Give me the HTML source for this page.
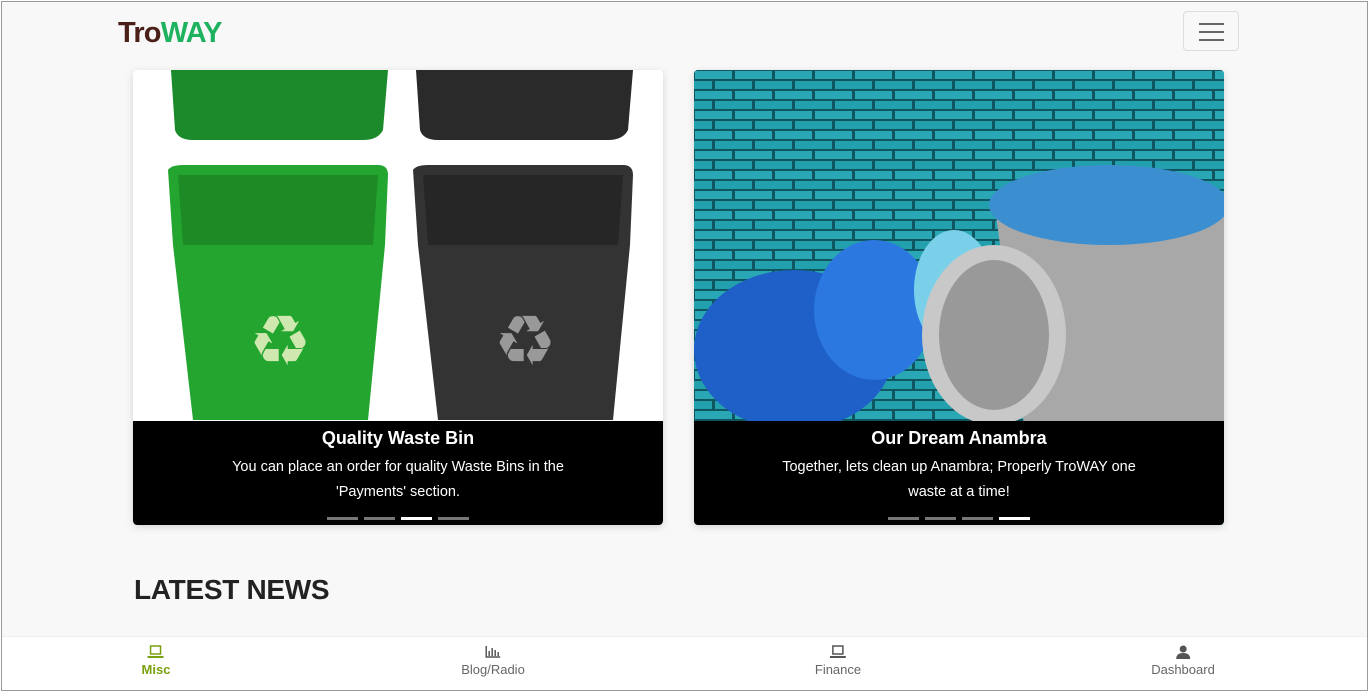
<!DOCTYPE html>
<html><head><meta charset="utf-8"><style>
*{box-sizing:border-box;margin:0;padding:0}
body{width:1370px;height:694px;overflow:hidden;background:#fff;font-family:"Liberation Sans",sans-serif;position:relative}
.frame{position:absolute;left:1px;top:1px;width:1367px;height:690px;border:1px solid #999;background:#f8f8f8;overflow:hidden}
.nav{position:absolute;left:0;top:0;width:100%;height:68px;background:#f8f8f8}
.logo{position:absolute;left:116px;top:15px;font-size:29px;font-weight:bold;letter-spacing:-0.8px}
.logo .t{color:#4a2018}.logo .w{color:#1eb25f}
.burger{position:absolute;left:1181px;top:9px;width:56px;height:40px;border:1px solid #ddd;border-radius:4px}
.burger i{position:absolute;left:15px;width:25px;height:2px;background:#666}
.card{position:absolute;top:68px;width:530px;height:455px;border-radius:4px;overflow:hidden;box-shadow:0 2px 8px rgba(0,0,0,.15)}
.cap{position:absolute;left:0;bottom:0;width:100%;height:104px;background:#000;color:#fff;text-align:center;border-radius:0 0 4px 4px}
.cap h3{font-size:18px;margin-top:7px}
.cap p{font-size:14.5px;line-height:25px;margin:6px auto 0;width:380px}
.ind{position:absolute;bottom:5px;left:0;width:100%;text-align:center;font-size:0}
.ind b{display:inline-block;width:31px;height:3px;background:#777;margin:0 3px}
.ind b.a{background:#fff}
h2{position:absolute;left:132px;top:572px;font-size:28px;color:#222;letter-spacing:-0.3px}
.bot{position:absolute;left:0;top:634px;width:100%;height:56px;background:#fff;border-top:1px solid #eee}
.it{position:absolute;top:8px;text-align:center;font-size:13px;color:#666;transform:translateX(-50%)}
.it svg{display:block;margin:0 auto 3px}
</style></head><body><div class="frame">
<div class="nav"><div class="logo"><span class="t">Tro</span><span class="w">WAY</span></div>
<div class="burger"><i style="top:11px"></i><i style="top:19px"></i><i style="top:27px"></i></div></div>

<div class="card" style="left:131px;background:#fff">
<svg width="530" height="355" style="position:absolute;top:0;left:0">
<path d="M38 0H255L250 60Q245 70 230 70H60Q45 70 42 60Z" fill="#1a8a2a"/>
<path d="M35 100Q38 95 50 95H245Q255 95 255 105L252 175 235 350H60L40 175Z" fill="#23a52f"/>
<path d="M45 105H245L240 175H50Z" fill="#1d8a26"/>
<text x="147" y="295" font-size="70" fill="#cfe8b0" text-anchor="middle" font-family="DejaVu Sans">♻</text>
<path d="M283 0H500L495 60Q490 70 475 70H305Q290 70 287 60Z" fill="#2a2a2a"/>
<path d="M280 100Q283 95 295 95H490Q500 95 500 105L497 175 480 350H305L285 175Z" fill="#333"/>
<path d="M290 105H490L485 175H295Z" fill="#262626"/>
<text x="392" y="295" font-size="70" fill="#999" text-anchor="middle" font-family="DejaVu Sans">♻</text>
</svg>
<div class="cap"><h3>Quality Waste Bin</h3><p>You can place an order for quality Waste Bins in the 'Payments' section.</p><div class="ind"><b></b><b></b><b class="a"></b><b></b></div></div></div>

<div class="card" style="left:692px;background:#1a8a98">
<svg width="530" height="355" style="position:absolute;top:0;left:0">
<defs><pattern id="br" width="40" height="20" patternUnits="userSpaceOnUse"><rect width="40" height="20" fill="#0f5660"/><rect x="1" y="1" width="37" height="8" fill="#2aa7b4"/><rect x="-19" y="11" width="37" height="8" fill="#23a0ad"/><rect x="21" y="11" width="37" height="8" fill="#23a0ad"/></pattern></defs>
<rect width="530" height="355" fill="url(#br)"/>
<ellipse cx="100" cy="280" rx="100" ry="80" fill="#1f5fc8"/>
<ellipse cx="180" cy="240" rx="60" ry="70" fill="#2a78e0"/>
<ellipse cx="260" cy="220" rx="40" ry="60" fill="#7ad0e8"/>
<path d="M300 130H530V355H330Z" fill="#a8a8a8"/>
<ellipse cx="415" cy="135" rx="120" ry="40" fill="#3b8fd0"/>
<ellipse cx="300" cy="265" rx="72" ry="90" fill="#c8c8c8"/>
<ellipse cx="300" cy="265" rx="55" ry="75" fill="#999"/>
</svg>
<div class="cap"><h3>Our Dream Anambra</h3><p>Together, lets clean up Anambra; Properly TroWAY one waste at a time!</p><div class="ind"><b></b><b></b><b></b><b class="a"></b></div></div></div>

<h2>LATEST NEWS</h2>
<div class="bot">
<div class="it" style="left:154px;color:#7aa10f;font-weight:bold"><svg width="16" height="14"><rect x="3" y="1" width="10" height="8" fill="none" stroke="#7aa10f" stroke-width="1.5"/><rect x="0" y="11" width="16" height="2" fill="#7aa10f"/></svg>Misc</div>
<div class="it" style="left:491px"><svg width="16" height="14"><path d="M1 1V12H15M4 11V6M7 11V3M10 11V5M13 11V7" stroke="#555" stroke-width="1.5" fill="none"/></svg>Blog/Radio</div>
<div class="it" style="left:836px"><svg width="16" height="14"><rect x="3" y="1" width="10" height="8" fill="none" stroke="#555" stroke-width="1.5"/><rect x="0" y="11" width="16" height="2" fill="#555"/></svg>Finance</div>
<div class="it" style="left:1181px"><svg width="16" height="14"><circle cx="8" cy="4" r="3.5" fill="#555"/><path d="M1 14Q1 8 8 8Q15 8 15 14Z" fill="#555"/></svg>Dashboard</div>
</div>
</div></body></html>
